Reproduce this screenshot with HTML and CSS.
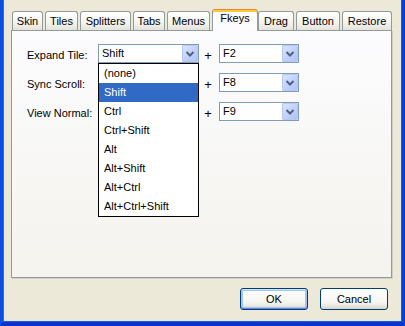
FILE: index.html
```html
<!DOCTYPE html>
<html>
<head>
<meta charset="utf-8">
<link rel="stylesheet" href="styles.css">
</head>
<body>
<div class="window">
  <div class="dialog">
    <div class="tabs">
      <div class="tab t-skin">Skin</div>
      <div class="tab t-tiles">Tiles</div>
      <div class="tab t-splitters">Splitters</div>
      <div class="tab t-tabs">Tabs</div>
      <div class="tab t-menus">Menus</div>
      <div class="tab tab-active t-fkeys">Fkeys</div>
      <div class="tab t-drag">Drag</div>
      <div class="tab t-button">Button</div>
      <div class="tab t-restore">Restore</div>
    </div>
    <div class="panel">
      <div class="form">
        <div class="label">Expand Tile:</div>
        <div class="combo combo-open">
          <span class="combo-text">Shift</span>
          <span class="combo-btn"><svg width="14" height="15" viewBox="0 0 14 15"><polyline points="3.5,6 7,9.5 10.5,6" fill="none" stroke="#4d6185" stroke-width="2"/></svg></span>
          <ul class="listbox">
            <li class="item">(none)</li>
            <li class="item item-sel">Shift</li>
            <li class="item">Ctrl</li>
            <li class="item">Ctrl+Shift</li>
            <li class="item">Alt</li>
            <li class="item">Alt+Shift</li>
            <li class="item">Alt+Ctrl</li>
            <li class="item">Alt+Ctrl+Shift</li>
          </ul>
        </div>
        <div class="plus">+</div>
        <div class="combo">
          <span class="combo-text">F2</span>
          <span class="combo-btn"><svg width="14" height="15" viewBox="0 0 14 15"><polyline points="3.5,6 7,9.5 10.5,6" fill="none" stroke="#4d6185" stroke-width="2"/></svg></span>
        </div>

        <div class="label">Sync Scroll:</div>
        <div class="combo combo-hidden"></div>
        <div class="plus">+</div>
        <div class="combo">
          <span class="combo-text">F8</span>
          <span class="combo-btn"><svg width="14" height="15" viewBox="0 0 14 15"><polyline points="3.5,6 7,9.5 10.5,6" fill="none" stroke="#4d6185" stroke-width="2"/></svg></span>
        </div>

        <div class="label">View Normal:</div>
        <div class="combo combo-hidden"></div>
        <div class="plus">+</div>
        <div class="combo">
          <span class="combo-text">F9</span>
          <span class="combo-btn"><svg width="14" height="15" viewBox="0 0 14 15"><polyline points="3.5,6 7,9.5 10.5,6" fill="none" stroke="#4d6185" stroke-width="2"/></svg></span>
        </div>
      </div>
    </div>
    <div class="buttons">
      <button class="btn btn-default">OK</button>
      <button class="btn">Cancel</button>
    </div>
  </div>
</div>
</body>
</html>
```
FILE: styles.css
```css
* { box-sizing: border-box; }
html, body {
  margin: 0;
  padding: 0;
  width: 405px;
  height: 326px;
  overflow: hidden;
  background: #ece9d8;
  font-family: "Liberation Sans", Arial, sans-serif;
  font-size: 11px;
  color: #000;
}
.window {
  width: 405px;
  height: 326px;
  background: #ece9d8;
  border-left: 3px solid #0b4ee2;
  border-right: 3px solid #0a3fd6;
  border-bottom: 4px solid #0834cf;
  box-shadow: inset 1px 0 0 #2a6cf0, inset -1px 0 0 #1b5be6, inset 0 -1px 0 #1c59e4;
}
.dialog {
  padding: 9px 10px 0 8px;
}
.tabs {
  display: flex;
  align-items: flex-end;
  gap: 2px;
  height: 21px;
  padding-left: 1px;
}
.tab {
  flex: none;
  height: 19px;
  padding: 0;
  text-align: center;
  line-height: 18px;
  border: 1px solid #919b9c;
  border-bottom: none;
  border-radius: 3px 3px 0 0;
  background: linear-gradient(#ffffff, #f3f3ef 60%, #e4e2d9);
  white-space: nowrap;
}
.t-skin { width: 31px; }
.t-tiles { width: 33px; }
.t-splitters { width: 51px; }
.t-tabs { width: 32px; }
.t-menus { width: 43px; }
.t-fkeys { width: 46px; }
.t-drag { width: 36px; }
.t-button { width: 44px; }
.t-restore { width: 50px; }
.tab-active {
  position: relative;
  z-index: 1;
  height: 22px;
  margin: 0 -2px -1px 0;
  padding-bottom: 3px;
  line-height: 16px;
  background: #fcfcfe;
  border-top: 1px solid #e68b2c;
  box-shadow: inset 0 2px 0 #ffc73c;
}
.panel {
  height: 248px;
  border: 1px solid #919b9c;
  background: linear-gradient(#fcfcfe, #f4f3ee);
  box-shadow: 1px 1px 0 #d3d0c2;
}
.form {
  display: grid;
  grid-template-columns: 71px 101px 20px 80px;
  grid-template-rows: repeat(3, 19px);
  row-gap: 10px;
  padding: 13px 0 0 15px;
}
.label {
  line-height: 19px;
  padding-top: 2px;
  white-space: nowrap;
}
.plus {
  text-align: center;
  font-size: 13px;
  line-height: 19px;
  padding-top: 2px;
  padding-right: 2px;
}
.combo {
  position: relative;
  display: flex;
  height: 19px;
  border: 1px solid #7f9db9;
  background: #fff;
}
.combo-open { z-index: 2; }
.combo-text {
  flex: 1;
  padding-left: 3px;
  line-height: 17px;
}
.combo-btn {
  width: 16px;
  height: 17px;
  border: 1px solid #b5c9f7;
  border-radius: 1px;
  background: linear-gradient(135deg, #dae4fe, #c1d1fb 55%, #b0c3f4);
  display: flex;
  align-items: center;
  justify-content: center;
}
.combo-btn svg { display: block; }
.listbox {
  position: absolute;
  z-index: 2;
  left: -1px;
  top: calc(100% + 1px);
  width: 101px;
  margin: 0;
  padding: 0;
  list-style: none;
  border: 1px solid #000;
  background: #fff;
}
.item {
  height: 19px;
  line-height: 19px;
  padding-left: 5px;
  white-space: nowrap;
}
.item-sel {
  background: #316ac5;
  color: #fff;
}
.buttons {
  display: flex;
  justify-content: flex-end;
  gap: 12px;
  margin-top: 10px;
  padding-right: 4px;
}
.btn {
  width: 68px;
  height: 22px;
  padding: 0;
  font-family: "Liberation Sans", Arial, sans-serif;
  font-size: 11px;
  color: #000;
  border: 1px solid #003c74;
  border-radius: 3px;
  background: linear-gradient(#ffffff, #f4f4f0 70%, #e3e0d6 90%, #d6d0c5);
}
.btn-default {
  box-shadow: inset 0 1px 0 #cee7ff, inset 0 -1px 0 #6982ee, inset 0 0 0 2px #a8c2ef;
}
```
